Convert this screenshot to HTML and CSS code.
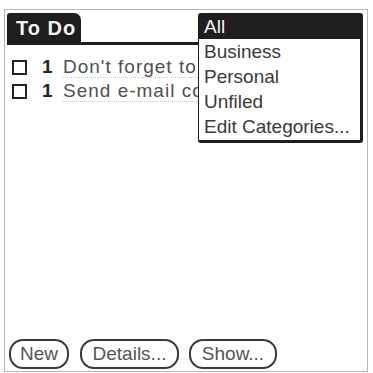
FILE: index.html
```html
<!DOCTYPE html>
<html>
<head>
<meta charset="utf-8">
<link rel="stylesheet" href="styles.css">
</head>
<body>
<div class="frame">
  <div class="titlebar">
    <div class="tab">To Do</div>
  </div>
  <div class="list">
    <div class="row">
      <span class="check"></span>
      <span class="prio">1</span>
      <span class="desc">Don't forget to call</span>
    </div>
    <div class="row">
      <span class="check"></span>
      <span class="prio">1</span>
      <span class="desc">Send e-mail confirmation</span>
    </div>
  </div>
  <div class="buttons">
    <div class="btn btn-new">New</div>
    <div class="btn btn-details">Details...</div>
    <div class="btn btn-show">Show...</div>
  </div>
  <div class="popup">
    <div class="item selected">All</div>
    <div class="item">Business</div>
    <div class="item">Personal</div>
    <div class="item">Unfiled</div>
    <div class="item">Edit Categories...</div>
  </div>
</div>
</body>
</html>
```
FILE: styles.css
```css
html, body {
  margin: 0;
  padding: 0;
  background: #fff;
}
body {
  width: 373px;
  height: 373px;
  overflow: hidden;
  font-family: "Liberation Sans", Arial, sans-serif;
  color: #3a3a3a;
}
.frame {
  position: relative;
  box-sizing: border-box;
  width: 364px;
  height: 363px;
  margin: 9px 0 0 4px;
  border: 1px solid #b8b8b8;
  display: flex;
  flex-direction: column;
  padding: 3px 4px 2px 2px;
  overflow: hidden;
}
.titlebar {
  display: flex;
  border-bottom: 3px solid #1e1e1e;
  width: 350px;
}
.tab {
  background: #1e1e1e;
  color: #f2f2f2;
  font-weight: bold;
  font-size: 20px;
  letter-spacing: 1px;
  height: 29px;
  line-height: 30px;
  width: 74px;
  box-sizing: border-box;
  padding-left: 9px;
  border-radius: 3px 7px 0 0;
}
.list {
  display: flex;
  flex-direction: column;
  padding: 10px 0 0 5px;
  flex: 1;
}
.row {
  display: flex;
  align-items: center;
  height: 24px;
  white-space: nowrap;
}
.check {
  width: 15px;
  height: 15px;
  box-sizing: border-box;
  border: 2px solid #222;
  margin-right: 15px;
  flex: none;
}
.prio {
  font-weight: bold;
  font-size: 19px;
  color: #222;
  width: 21px;
  flex: none;
}
.desc {
  font-size: 19px;
  letter-spacing: 1px;
  color: #505050;
  border-bottom: 1px dotted #c4c4c4;
  line-height: 20px;
}
.buttons {
  display: flex;
  gap: 10px;
  padding-left: 2px;
}
.btn {
  box-sizing: border-box;
  height: 30px;
  border: 2px solid #3a3a3a;
  border-radius: 14px;
  font-size: 19px;
  color: #555;
  text-align: center;
  line-height: 26px;
}
.btn-new { width: 60px; }
.btn-details { width: 99px; margin-left: 1px; }
.btn-show { width: 88px; }
.popup {
  position: absolute;
  left: 193px;
  top: 3px;
  width: 165px;
  box-sizing: border-box;
  background: #fff;
  border: 1px solid #1e1e1e;
  border-right-width: 3px;
  border-bottom-width: 3px;
  border-radius: 3px;
  padding: 0 0 1px 0;
}
.item {
  height: 25px;
  line-height: 26px;
  font-size: 19px;
  color: #3a3a3a;
  padding-left: 5px;
  white-space: nowrap;
}
.item.selected {
  background: #1e1e1e;
  color: #f4f4f4;
}
```
